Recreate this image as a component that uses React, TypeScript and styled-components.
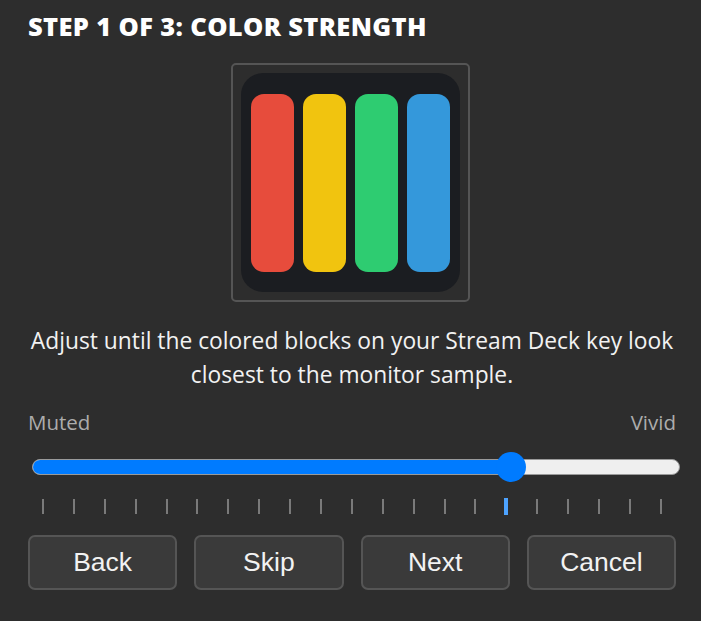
import React from 'react';
import styled, { createGlobalStyle } from 'styled-components';

const GlobalStyle = createGlobalStyle`
  html, body {
    margin: 0;
    padding: 0;
    background: #2d2d2d;
  }
  body {
    font-family: 'Open Sans', 'Noto Sans', sans-serif;
    color: #f0f0f0;
  }
`;

const Panel = styled.div`
  width: 701px;
  height: 621px;
  box-sizing: border-box;
  padding: 10px 25px 0 28px;
  display: flex;
  flex-direction: column;
`;

const Title = styled.h1`
  margin: 0;
  font-family: 'Open Sans', sans-serif;
  font-weight: 800;
  font-size: 25.5px;
  line-height: 32px;
  letter-spacing: 0.35px;
  color: #ffffff;
  text-transform: uppercase;
`;

const PreviewFrame = styled.div`
  align-self: center;
  margin: 21px 0 0 -3px;
  width: 239px;
  height: 239px;
  box-sizing: border-box;
  border: 2px solid #555555;
  border-radius: 5px;
  padding: 8px;
`;

const Key = styled.div`
  width: 219px;
  height: 219px;
  box-sizing: border-box;
  background: #1b1d21;
  border-radius: 22px;
  padding: 21px 10px 20px;
  display: flex;
  justify-content: space-between;
`;

const Bar = styled.div<{ $color: string }>`
  width: 43px;
  height: 178px;
  border-radius: 13px;
  background: ${(p) => p.$color};
`;

const Hint = styled.p`
  margin: 22px -4px 0 -4px;
  text-align: center;
  font-size: 22.8px;
  line-height: 34px;
  color: #f2f2f2;
  white-space: nowrap;
`;

const LabelRow = styled.div`
  margin-top: 18px;
  display: flex;
  justify-content: space-between;
  font-size: 20.5px;
  line-height: 24px;
  color: #acacac;
`;

const SliderWrap = styled.div`
  margin: 18px -4px 0 4px;
  position: relative;
  height: 30px;
  display: flex;
  align-items: center;
`;

const Track = styled.div`
  position: relative;
  width: 100%;
  height: 16px;
  box-sizing: border-box;
  border-radius: 8px;
  background: #efefef;
  border: 1px solid #9a9a9a;
  overflow: hidden;
`;

const Fill = styled.div`
  height: 100%;
  background: #007bff;
`;

const Thumb = styled.div`
  position: absolute;
  top: 0;
  width: 30px;
  height: 30px;
  margin-left: -15px;
  border-radius: 50%;
  background: #007bff;
`;

const Ticks = styled.div`
  margin: 16px 13px 0 13px;
  height: 17px;
  display: flex;
  justify-content: space-between;
  align-items: stretch;
`;

const Tick = styled.span<{ $active: boolean }>`
  width: ${(p) => (p.$active ? 4 : 2)}px;
  margin: ${(p) => (p.$active ? 0 : '1px 1px')};
  background: ${(p) => (p.$active ? '#4da3ff' : '#7a7a7a')};
`;

const ButtonRow = styled.div`
  margin-top: 20px;
  display: grid;
  grid-template-columns: repeat(4, 1fr);
  gap: 17px;
`;

const Button = styled.button`
  height: 55px;
  box-sizing: border-box;
  border: 2px solid #555555;
  border-radius: 7px;
  background: #3a3a3a;
  color: #f2f2f2;
  font-family: 'Liberation Sans', Arial, sans-serif;
  font-size: 26.5px;
  padding: 0;
  cursor: pointer;
`;

const colors = ['#e74c3c', '#f1c40f', '#2ecc71', '#3498db'];
const value = 75;
const ticks = Array.from({ length: 21 }, (_, i) => i * 5);

export default function App() {
  return (
    <>
      <GlobalStyle />
      <Panel>
        <Title>Step 1 of 3: Color Strength</Title>
        <PreviewFrame>
          <Key>
            {colors.map((c) => (
              <Bar key={c} $color={c} />
            ))}
          </Key>
        </PreviewFrame>
        <Hint>
          Adjust until the colored blocks on your Stream Deck key look
          <br />
          closest to the monitor sample.
        </Hint>
        <LabelRow>
          <span>Muted</span>
          <span>Vivid</span>
        </LabelRow>
        <SliderWrap>
          <Track>
            <Fill style={{ width: `calc(15px + ${value / 100} * (100% - 30px))` }} />
          </Track>
          <Thumb style={{ left: `calc(15px + ${value / 100} * (100% - 30px))` }} />
        </SliderWrap>
        <Ticks>
          {ticks.map((t) => (
            <Tick key={t} $active={t === value} />
          ))}
        </Ticks>
        <ButtonRow>
          <Button>Back</Button>
          <Button>Skip</Button>
          <Button>Next</Button>
          <Button>Cancel</Button>
        </ButtonRow>
      </Panel>
    </>
  );
}
